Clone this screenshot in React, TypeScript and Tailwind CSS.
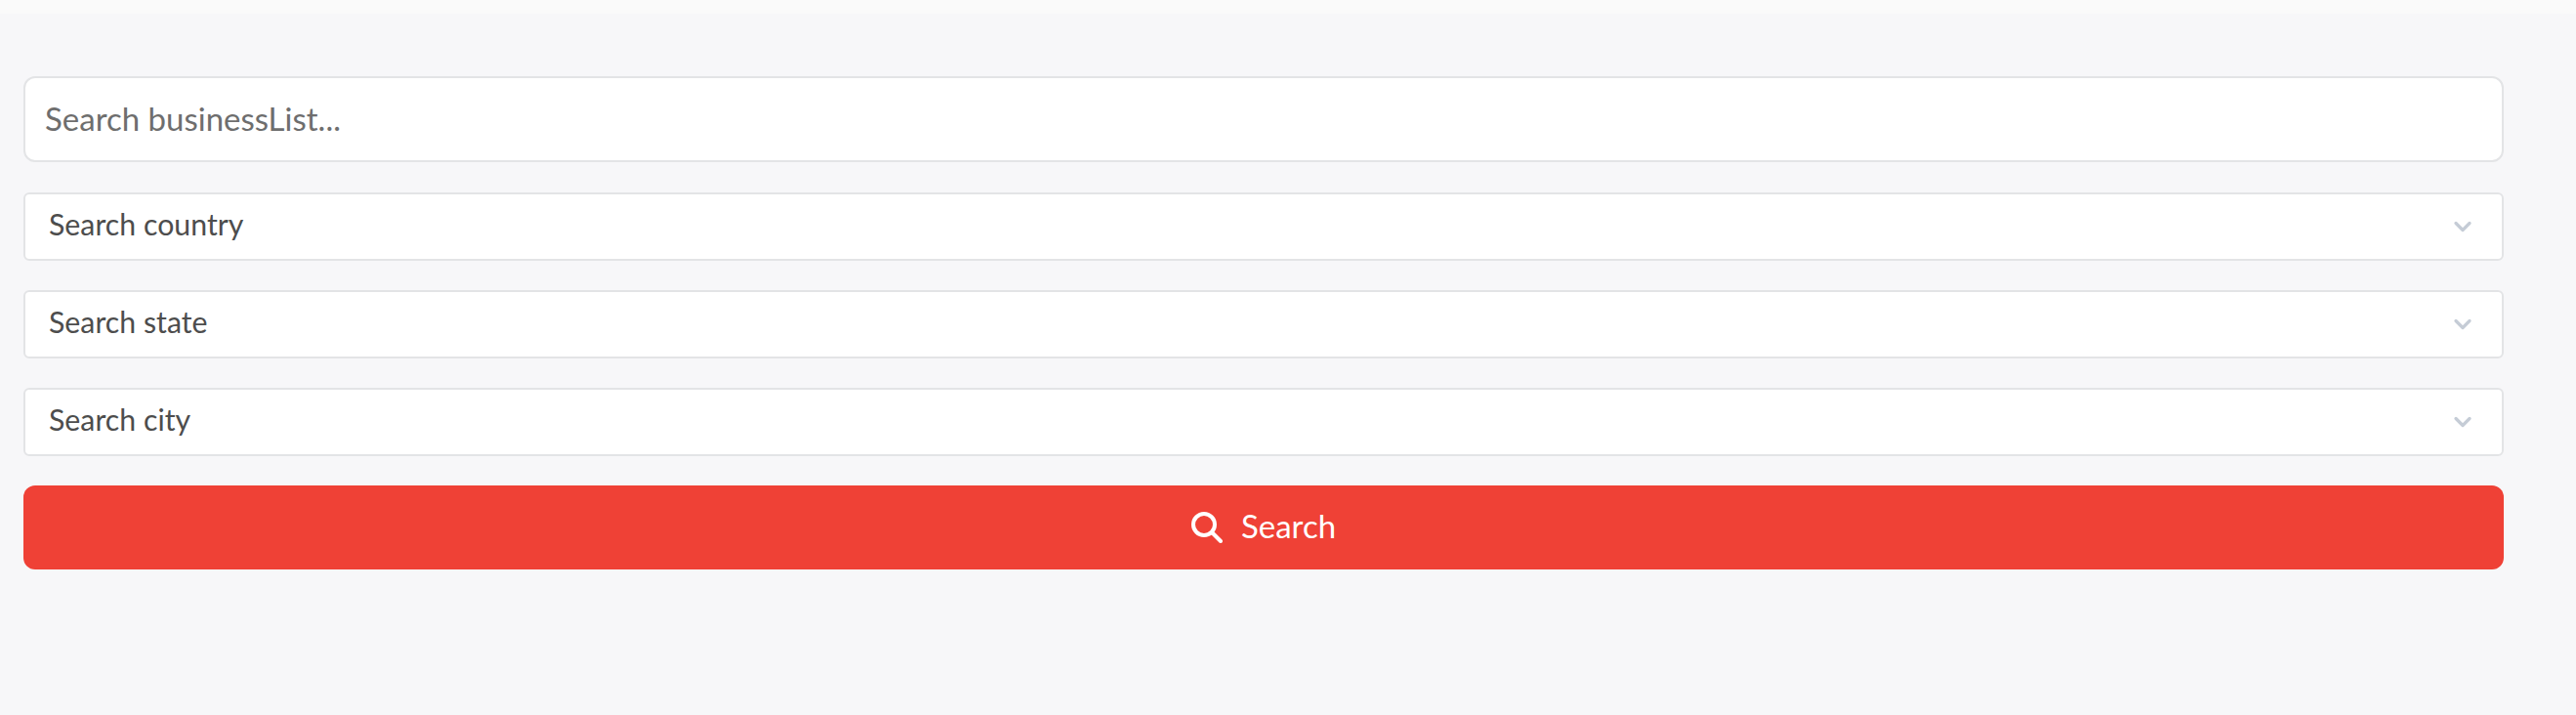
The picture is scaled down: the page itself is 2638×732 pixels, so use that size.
import { ChevronDown } from "lucide-react";

const selects = ["Search country", "Search state", "Search city"];

export default function App() {
  return (
    <main className="h-[732px] w-[2638px] overflow-hidden bg-[#f7f7f9] font-['Lato',sans-serif]">
      <div className="h-[14px] bg-[#fafafa]" />
      <form className="flex w-[2564px] flex-col pl-[24px] pt-[64px]">
        <input
          placeholder="Search businessList..."
          className="h-[88px] w-full rounded-[12px] border-2 border-[#e3e4e6] bg-white px-[20px] pb-[3px] text-[33px] text-[#6e6e6e] outline-none placeholder:text-[#6e6e6e]"
        />
        <div className="mt-[31px] flex flex-col gap-[30px]">
          {selects.map((label) => (
            <div
              key={label}
              className="flex h-[70px] items-center justify-between rounded-[6px] border-2 border-[#e3e4e6] bg-white pl-[24px] pr-[26px] text-[30.3px] text-[#4d4d4d]"
            >
              <span className="-translate-y-[2px]">{label}</span>
              <ChevronDown size={28} strokeWidth={2.8} className="text-[#c5ccd6]" />
            </div>
          ))}
        </div>
        <button
          type="button"
          className="mt-[30px] flex h-[86px] w-full items-center justify-center gap-[19px] rounded-[12px] bg-[#ef4136] text-[33px] text-white"
        >
          {/* heavier than lucide's Search, drawn to match the reference */}
          <svg width="32" height="32" viewBox="0 0 32 32" fill="none" stroke="currentColor" strokeWidth="4" strokeLinecap="round">
            <circle cx="13" cy="13" r="11" />
            <line x1="21.5" y1="21.5" x2="30" y2="30" />
          </svg>
          <span className="-translate-y-[1px]">Search</span>
        </button>
      </form>
    </main>
  );
}
